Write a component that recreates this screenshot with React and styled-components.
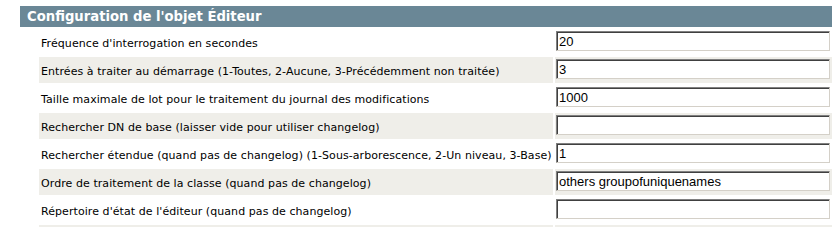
import React from 'react'
import styled, { createGlobalStyle } from 'styled-components'

const GlobalStyle = createGlobalStyle`
  body {
    margin: 0;
    background: #ffffff;
    font-family: "DejaVu Sans", Verdana, sans-serif;
    overflow: hidden;
  }
`

const rows = [
  { label: "Fréquence d'interrogation en secondes", value: '20' },
  { label: 'Entrées à traiter au démarrage (1-Toutes, 2-Aucune, 3-Précédemment non traitée)', value: '3' },
  { label: 'Taille maximale de lot pour le traitement du journal des modifications', value: '1000' },
  { label: 'Rechercher DN de base (laisser vide pour utiliser changelog)', value: '' },
  { label: 'Rechercher étendue (quand pas de changelog) (1-Sous-arborescence, 2-Un niveau, 3-Base)', value: '1' },
  { label: 'Ordre de traitement de la classe (quand pas de changelog)', value: 'others groupofuniquenames' },
  { label: "Répertoire d'état de l'éditeur (quand pas de changelog)", value: '' },
  { label: '', value: null },
]

const App = () => {
  return (
    <Page>
      <GlobalStyle />
      <Header>Configuration de l'objet Éditeur</Header>
      <Table>
        {rows.map((row, i) => (
          <Row key={i} $shaded={i % 2 === 1}>
            <Label>{row.label}</Label>
            <Field>
              {row.value !== null && <Input defaultValue={row.value} />}
            </Field>
          </Row>
        ))}
      </Table>
    </Page>
  )
}

const Page = styled.div`
  padding: 6px 0 0 20px;
`

const Header = styled.div`
  height:         21px;
  line-height:    22px;
  background:     #6a8796;
  color:          #ffffff;
  font-weight:    bold;
  font-size:      13.2px;
  padding-left:   7px;
`

const Table = styled.div`
  margin:         2px 0 0 19px;
  display:        flex;
  flex-direction: column;
  gap:            2px;
`

const Row = styled.div`
  display:               grid;
  grid-template-columns: 514px 1fr;
  column-gap:            2px;
  height:                26px;

  & > div {
    background: ${p => (p.$shaded ? '#efeee9' : '#ffffff')};
  }
`

const Label = styled.div`
  display:        flex;
  align-items:    center;
  padding:        2px 0 0 2px;
  font-size:      11px;
  letter-spacing: 0.07px;
  color:          #000000;
  white-space:    nowrap;
  overflow:       hidden;
`

const Field = styled.div`
  padding: 2px 2px 0 1px;
`

const Input = styled.input`
  box-sizing:    border-box;
  width:         274px;
  height:        20px;
  margin:        0;
  padding:       1px 2px 0 2px;
  border:        1px solid;
  border-color:  #808080 #d4d0c8 #d4d0c8 #808080;
  box-shadow:    inset 1px 1px 0 #404040;
  background:    #ffffff;
  font-family:   "Liberation Sans", Arial, sans-serif;
  font-size:     13px;
  color:         #000000;
  outline:       none;
`

export default App
